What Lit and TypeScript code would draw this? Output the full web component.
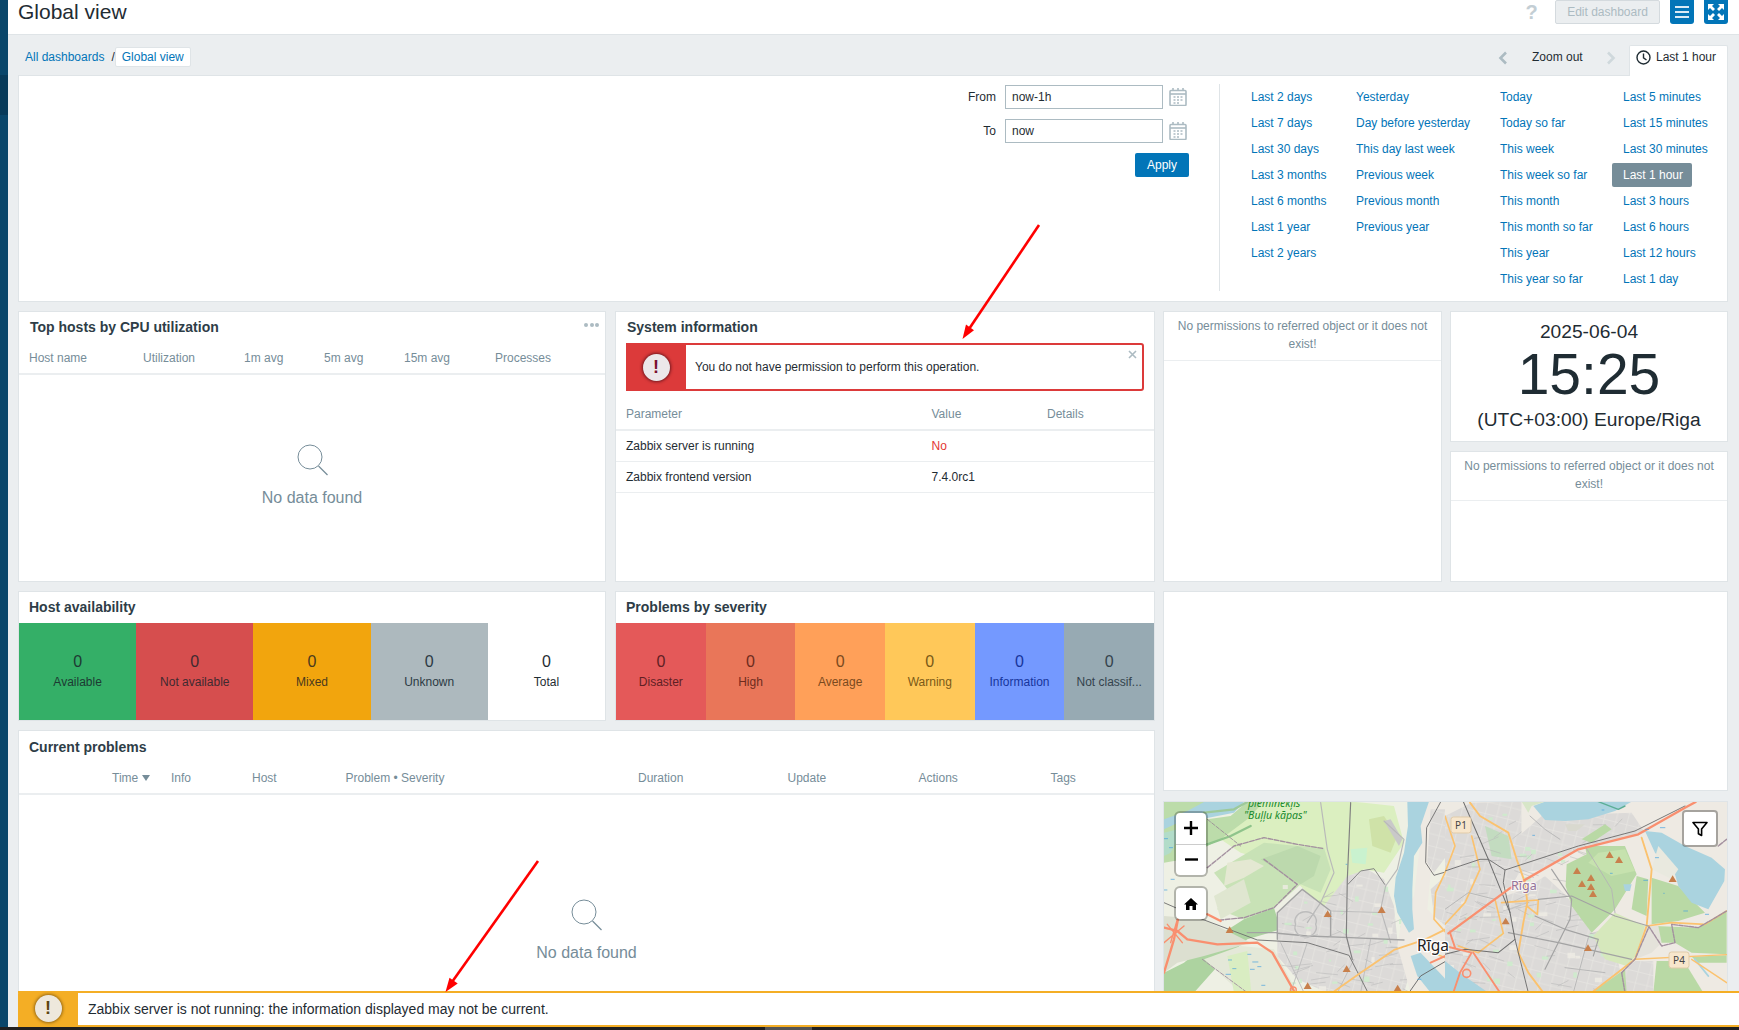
import { LitElement, html, css, svg } from "lit";
import { customElement } from "lit/decorators.js";

const QUICK: string[][] = [
  ["Last 2 days", "Yesterday", "Today", "Last 5 minutes"],
  ["Last 7 days", "Day before yesterday", "Today so far", "Last 15 minutes"],
  ["Last 30 days", "This day last week", "This week", "Last 30 minutes"],
  ["Last 3 months", "Previous week", "This week so far", "Last 1 hour"],
  ["Last 6 months", "Previous month", "This month", "Last 3 hours"],
  ["Last 1 year", "Previous year", "This month so far", "Last 6 hours"],
  ["Last 2 years", "", "This year", "Last 12 hours"],
  ["", "", "This year so far", "Last 1 day"],
];

const HOST = [
  ["Available", "av"], ["Not available", "na"], ["Mixed", "mx"], ["Unknown", "un"], ["Total", "tt"],
];
const SEV = [
  ["Disaster", "s1"], ["High", "s2"], ["Average", "s3"], ["Warning", "s4"], ["Information", "s5"], ["Not classif...", "s6"],
];

// Map artwork: each array is written in the pixel space of a 3x crop, scaled by the groups below.
const tri = (x: number, y: number) => svg`<polygon points="${x},${y - 11} ${x + 12},${y + 9} ${x - 12},${y + 9}" fill="#c8804c"/>`;
const dash = (x: number, y: number, w = 12) => svg`<line x1=${x} y1=${y} x2=${x + w} y2=${y} stroke="#3f9fe0" stroke-width="2"/>`;
const p = (d: string, s: string, w: number, extra = "") => svg`<path d=${d} fill="none" stroke=${s} stroke-width=${w * 1.4} stroke-linejoin="round" stroke-linecap="round" stroke-dasharray=${extra || "none"}/>`;
const f = (d: string, c: string) => svg`<path d=${d} fill=${c}/>`;

// Deterministic speckle: small parks and side streets inside the built-up areas.
function speckle(seed: number, n: number, x0: number, x1: number, y0: number, y1: number) {
  let s = seed;
  const r = () => { s = (s * 9301 + 49297) % 233280; return s / 233280; };
  const out = [];
  for (let i = 0; i < n; i++) {
    const x = x0 + r() * (x1 - x0), y = y0 + r() * (y1 - y0), k = r();
    if (k < 0.3) out.push(svg`<rect x=${x} y=${y} width=${6 + r() * 16} height=${5 + r() * 12} fill="#cdeccb" opacity=".85"/>`);
    else if (k < 0.5) out.push(svg`<rect x=${x} y=${y} width=${8 + r() * 20} height=${6 + r() * 14} fill="#efece5" opacity=".8"/>`);
    else out.push(svg`<line x1=${x} y1=${y} x2=${x + 20 + r() * 50} y2=${y + (r() - .5) * 50} stroke="#b7b7b7" stroke-width="1.6"/>`);
  }
  return out;
}

const URBAN = "url(#city)";
const leftMap = svg`
  ${f("M0 0H860V600H0Z", "#eef0e4")}
  ${f("M300 17H560L600 20 690 30 720 140 660 230 600 220 550 260 480 340 400 260 300 190 230 170 170 130 130 90Z", "#dbefc0")}
  ${f("M0 17H120L130 70 200 60 250 17H300L250 70 170 130 130 150 60 190 0 200Z", "#bcdcaa")}
  ${f("M150 230 300 140 400 150 480 155 500 220 470 290 410 265 330 335 240 370 160 340 190 280Z", "#c8e2b6")}
  ${f("M290 190 400 150 470 180 450 240 410 265Z", "#bcd9ad")}
  ${f("M240 370 330 335 350 400 250 430 170 500 90 590H0V530L60 500 130 440Z", "#add3a0")}
  ${f("M120 490 230 450 330 460 400 590H230Z", "#e4e8d8")}
  ${f("M190 480 250 465 262 590H210Z", "#d9edc2")}
  ${f("M340 350 415 280 480 330 550 240 610 220 660 250 690 330 700 430 745 510 720 590H490L400 550 340 480Z", URBAN)}
  ${speckle(11, 70, 350, 720, 260, 580)}
  ${f("M150 300 240 250 260 320 170 370Z", "#dfe6d0")}
  ${f("M190 200 260 190 300 210 240 245 180 270Z", "#e4e8d2")}
  ${f("M0 360 120 370 260 440 120 480 40 500 0 530Z", "#dcdfd0")}
  ${f("M560 160 610 155 605 205 565 200Z", "#c9f2cf")}
  ${f("M615 70 660 60 700 120 680 170 625 150Z", "#cfe2a8")}
  ${f("M770 17H855V170L800 230 790 340 850 400 855 590H740L700 450 715 360 750 300 770 130Z", "#eeeae3")}
  ${f("M800 40H855V170L810 230 790 200Z", URBAN)}
  ${f("M800 280 855 230V400L810 360Z", URBAN)}
  ${f("M730 17H795L770 90 775 140 750 180 745 280 745 340 750 400 735 410 700 350 690 300 695 245 720 170 732 90Z", "#aad3df")}
  ${f("M740 480 770 470 855 560V590H800L760 540Z", "#aad3df")}
  ${f("M120 18H240L210 50 130 66 60 72 0 100V70L70 45Z", "#aad3df")}
  ${f("M660 75 680 70 715 130 705 150Z", "#c9c9c9")}
  ${f("M0 110 60 95 20 170 0 180Z", "#b2dcc9")}
  ${p("M120 50 210 40 250 18", "#9dc99a", 5)}
  ${p("M60 140 130 145 200 120 260 90", "#8fc48b", 5)}
  ${p("M300 190 400 265 330 335 240 365 170 372", "#a3909f", 3, "14 5")}
  ${p("M130 215 210 150 300 125 400 145 480 158", "#a3909f", 3, "14 5")}
  ${p("M115 490 250 590", "#a3909f", 2, "12 5")}
  ${p("M130 70 230 150", "#9c8f98", 2, "12 5")}
  ${p("M470 20 490 160 510 230 470 320 430 380", "#b9b9b9", 2.5)}
  ${p("M660 75 720 130 700 220 665 270 650 340 680 440", "#b9b9b9", 2.5)}
  ${p("M340 430V350L415 280 500 345V420", "#a3a3a3", 3)}
  ${p("M340 412 430 420 560 425 720 432", "#a3a3a3", 3)}
  ${p("M250 410H340", "#a3a3a3", 3)}
  ${p("M500 345 660 350", "#bcbcbc", 2)}
  ${p("M395 385a32 28 0 1 1 60 0 32 28 0 1 1 -60 0", "#bcbcbc", 3)}
  ${p("M350 440 420 590", "#bcbcbc", 2)}
  ${p("M430 440 380 590", "#bcbcbc", 2)}
  ${p("M620 430 590 590", "#bcbcbc", 2)}
  ${p("M570 490 520 590", "#bcbcbc", 2)}
  ${p("M560 20 550 250 547 420 565 490", "#808080", 2.5)}
  ${p("M0 320 110 368 280 432 430 440 555 478 612 590", "#707070", 2)}
  ${p("M552 265 590 225 630 218 662 265", "#808080", 2)}
  ${p("M855 225 810 238 785 200 788 95 830 18", "#707070", 2)}
  ${p("M735 590 770 540 855 490", "#666", 2)}
  ${p("M505 590 590 530 690 462 780 432 855 395", "#fbc26e", 4)}
  ${p("M855 205 815 290 810 370 855 420", "#fbc26e", 3.5)}
  ${p("M770 455 855 490", "#fbc26e", 3.5)}
  ${p("M130 355 170 375", "#f98f6f", 5)}
  ${p("M0 395 40 405 70 430 160 445 280 440 325 470 390 585", "#f98f6f", 5)}
  ${p("M42 370 30 430 0 530", "#f98f6f", 5)}
  ${p("M0 440 60 390 M10 385 55 440 M20 440 40 370", "#f98f6f", 3)}
  <circle cx="388" cy="582" r="9" fill="none" stroke="#f98f6f" stroke-width="4"/>
  ${p("M855 475 800 500", "#f98f6f", 4)}
  ${dash(192, 492)}${dash(205, 518)}${dash(250, 475)}${dash(265, 498, 18)}${dash(185, 535, 16)}${dash(258, 520, 14)}${dash(280, 512)}${dash(292, 568)}
  ${dash(0, 128)}${dash(15, 155)}${dash(20, 250)}${dash(0, 282, 10)}${dash(545, 205, 5)}${dash(760, 550, 12)}
  ${tri(197, 402)}${tri(491, 354)}${tri(653, 342)}${tri(548, 519)}${tri(431, 570)}${tri(701, 577)}
`;

const rightMap = svg`
  ${f("M0 0H880V600H0Z", "#eeeae3")}
  ${f("M0 60 80 20 230 17V220L180 300 0 400Z", URBAN)}
  ${f("M230 17H280L270 100 360 150 300 240 230 240Z", "#eeeae3")}
  ${f("M120 90 190 120 200 190 140 180Z", "#c3dcc0")}
  ${f("M290 60 560 50 600 110 420 150 300 220 220 230 210 130Z", URBAN)}
  ${f("M0 400 180 300 240 280 300 240 365 300 440 410 480 440 520 500 540 590H0Z", URBAN)}
  ${speckle(23, 90, 0, 520, 240, 580)}
  ${speckle(37, 35, 0, 560, 40, 230)}
  ${f("M365 205 425 175 420 150 540 150 575 235 510 340 500 350 440 410 380 330 362 270Z", "#b9d9a5")}
  ${f("M460 170 540 160 570 225 500 240 430 200Z", "#c6e2ae")}
  ${f("M575 240 610 250 605 360 560 340Z", "#b9d9a5")}
  ${f("M620 245 700 270 780 350 700 375 620 385Z", "#b9d9a5")}
  ${f("M445 420 510 350 600 390 590 460 545 510 480 490Z", "#d6e8bc")}
  ${f("M630 390 760 395 845 345V475L740 470 690 440 640 440Z", "#b9d9a5")}
  ${f("M635 495H720L780 590H625Z", "#b9d9a5")}
  ${f("M740 482 845 478V565L780 520Z", "#b9d9a5")}
  ${f("M530 530 570 495 625 495 625 590H540Z", URBAN)}
  ${f("M440 590 540 520 545 590Z", "#b9d9a5")}
  ${f("M720 500 775 590H850V500Z", "#eeeae3")}
  ${f("M600 390 640 390 650 440 620 470 570 490Z", "#e4e2da")}
  ${f("M265 30 300 17H560L510 45 430 70 360 75 300 72Z", "#aad3df")}
  ${f("M600 105 650 110 720 150 800 185 840 220 838 255 790 340 740 320 700 270 690 235 630 170Z", "#aad3df")}
  ${f("M0 495 50 535 130 590H0Z", "#aad3df")}
  ${f("M230 17H300L260 30 250 50Z", "#d7e6c8")}
  ${f("M360 85H420L395 105 370 105Z", "#d9d9cf")}
  ${f("M410 130 480 85 500 100 440 140Z", "#b9d9a5")}
  ${f("M535 265 560 265 555 285 540 285Z", "#aad3df")}
  ${f("M640 150 700 220 680 250 620 220Z", "#e9e9df")}
  ${p("M460 17 520 40 540 30", "#5cae96", 3)}
  ${p("M750 490 790 540", "#aad3df", 4)}
  ${p("M0 60 30 150 0 230", "#fbc26e", 3.5)}
  ${p("M75 20 105 60 190 110 215 190 240 260 247 320 235 380 220 470 250 530 295 590", "#fbc26e", 4)}
  ${p("M80 120 105 220 60 320 0 385", "#fbc26e", 3.5)}
  ${p("M150 310 175 412 100 470 40 450", "#fbc26e", 3.5)}
  ${p("M170 320 280 312 277 355 245 330", "#fbc26e", 3.5)}
  ${p("M590 125 620 220 605 390 570 490 440 590", "#fbc26e", 4)}
  ${p("M605 390 680 380 780 385 845 345", "#fbc26e", 3.5)}
  ${p("M570 490 845 476", "#fbc26e", 3)}
  ${p("M740 490 845 560", "#fbc26e", 3)}
  ${p("M290 590 440 590", "#fbc26e", 3)}
  ${p("M270 360 360 400 460 430 445 480", "#a3a3a3", 2.5)}
  ${p("M190 410 340 440 560 490", "#a3a3a3", 2.5)}
  ${p("M280 310 380 300 510 360 610 390", "#a3a3a3", 2.5)}
  ${p("M320 220 380 310 375 370 300 520", "#a3a3a3", 2.5)}
  ${p("M430 425 385 590", "#b5b5b5", 2)}
  ${p("M360 515 480 530", "#b5b5b5", 2)}
  ${p("M255 60 300 100 345 130", "#b5b5b5", 2)}
  ${p("M420 150 500 280 510 350", "#b5b5b5", 2)}
  ${p("M0 340 70 290 150 310", "#b5b5b5", 2)}
  ${p("M530 530 570 490 612 392 650 450 690 440 680 385 760 395 845 345", "#a3909f", 3, "12 4")}
  ${p("M530 530 540 590", "#a3909f", 3, "12 4")}
  ${p("M845 130 820 150", "#a3909f", 3, "12 4")}
  ${p("M55 17 130 190 195 350 210 430 160 470 60 460 0 475", "#6e6e6e", 2.2)}
  ${p("M0 225 105 190 130 190 180 222 400 150 570 105 720 30", "#6e6e6e", 2)}
  ${p("M180 222 175 260 195 350", "#6e6e6e", 2)}
  ${p("M210 430 250 590", "#6e6e6e", 2)}
  ${p("M10 412 190 280 400 160 580 115 720 35 752 18", "#f98f6f", 5)}
  ${p("M0 450 80 470 45 530 25 590", "#f98f6f", 4)}
  ${p("M15 410 30 455", "#f98f6f", 4)}
  ${p("M85 470 165 590", "#f98f6f", 4)}
  <circle cx="65" cy="532" r="12" fill="none" stroke="#f98f6f" stroke-width="5"/>
  ${dash(470, 42, 8)}${dash(600, 100)}${dash(645, 95, 16)}${dash(595, 253, 14)}${dash(630, 185)}${dash(715, 345, 14)}${dash(780, 355)}${dash(495, 232, 8)}${dash(262, 118, 8)}${dash(655, 292, 4)}
  ${tri(494, 177)}${tri(522, 192)}${tri(396, 225)}${tri(438, 246)}${tri(411, 264)}${tri(438, 273)}${tri(444, 294)}${tri(683, 249)}${tri(182, 376)}${tri(429, 456)}
`;

@customElement("app-root")
export class AppRoot extends LitElement {
  static styles = css`
    :host { display: block; width: 1739px; height: 1030px; position: relative; overflow: hidden;
      font-family: "Liberation Sans", Arial, sans-serif; font-size: 12px; color: #1f2c33; background: #ebeef0; }
    * { box-sizing: border-box; }
    a { color: #0275b8; text-decoration: none; white-space: nowrap; }
    .shell { display: flex; height: 1027px; }
    .taskbar { height: 3px; background: #202020; display: flex; padding-left: 765px; }
    .taskbar i { display: block; width: 47px; background: #555; }
    .side { width: 8px; flex: none; background: #0a466a; padding-top: 75px; }
    .side i { display: block; height: 40px; background: #083a59; }
    .main { flex: 1; min-width: 0; position: relative; overflow: hidden; }

    .top { height: 35px; background: #fff; border-bottom: 1px solid #dfe4e7; display: flex; padding-left: 10px; padding-right: 11px; }
    .top h1 { margin: 0; font-size: 21px; font-weight: 400; line-height: 24px; flex: 1; }
    .help { width: 47px; text-align: center; font-size: 20px; font-weight: 700; color: #c3ced4; line-height: 24px; }
    .edit { width: 105px; height: 24px; background: #ebeef0; border: 1px solid #d4dade; border-radius: 2px; color: #acbbc2; font-size: 12px; line-height: 22px; text-align: center; }
    .ib { width: 24px; height: 24px; background: #0275b8; border-radius: 0 0 3px 3px; margin-left: 10px; display: flex; align-items: center; justify-content: center; }

    .sub { height: 40px; display: flex; padding-left: 10px; padding-right: 11px; }
    .crumbs { flex: 1; display: flex; align-items: flex-start; padding-top: 12px; }
    .crumbs a.plain { padding: 0 7px 0 7px; line-height: 20px; }
    .crumbs span { line-height: 20px; color: #1f2c33; }
    .crumbs a.cur { background: #fff; border: 1px solid #dfe4e7; line-height: 18px; height: 20px; padding: 0 6px; margin-left: 0; border-radius: 2px; }
    .zoom { display: flex; align-items: flex-start; padding-top: 15px; }
    .zoom .lbl { line-height: 14px; width: 74px; }
    .chev { margin-top: 1px; display: block; }
    .chev.l { margin-right: 24px; }
    .chev.r { margin-right: 13px; }
    .tab { width: 99px; margin-top: 10px; height: 31px; background: #fff; border: 1px solid #dfe4e7; border-bottom: 0; display: flex; align-items: center; gap: 5px; padding: 0 0 8px 6px; position: relative; z-index: 1; border-radius: 2px 2px 0 0; white-space: nowrap; }

    .filter { width: 1710px; margin-left: 10px; height: 227px; background: #fff; border: 1px solid #dfe4e7; display: flex; justify-content: flex-end; padding-top: 9px; }
    .form { width: 232px; margin-right: 29px; display: flex; flex-direction: column; gap: 10px; }
    .frow { display: flex; align-items: center; height: 24px; }
    .frow label { flex: 1; text-align: right; padding-right: 9px; }
    .frow .inp { width: 158px; height: 24px; border: 1px solid #acbbc2; padding: 0 6px; line-height: 22px; background: #fff; flex: none; }
    .frow svg { margin-left: 6px; margin-right: 3px; flex: none; }
    .apply { align-self: flex-end; width: 54px; margin-right: 1px; height: 24px; background: #0275b8; color: #fff; border-radius: 2px; line-height: 24px; text-align: center; }
    .quick { width: 508px; border-left: 1px solid #dfe4e7; height: 207px; padding-left: 31px; display: grid; grid-template-columns: 105px 144px 123px 1fr; grid-auto-rows: 26px; align-items: center; margin-top: -1px; }
    .quick a.on { background: #768d99; color: #fff; margin-left: -11px; padding: 0 8px 0 11px; width: 80px; height: 24px; line-height: 24px; border-radius: 2px; }

    .grid { margin: 9px 0 0 10px; width: 1711px; display: grid; grid-template-columns: 589px 540px 279px 278px; column-gap: 8px; row-gap: 9px; grid-template-rows: 131px 130.5px 130.5px 61px 272px; }
    .w { background: #fff; border: 1px solid #dfe4e7; display: flex; flex-direction: column; min-width: 0; overflow: hidden; position: relative; }
    .a-top { grid-column: 1; grid-row: 1 / 3; margin-right: 1px; }
    .a-sys { grid-column: 2; grid-row: 1 / 3; }
    .a-per { grid-column: 3; grid-row: 1 / 3; }
    .a-clk { grid-column: 4; grid-row: 1; }
    .a-pe2 { grid-column: 4; grid-row: 2; }
    .a-hst { grid-column: 1; grid-row: 3; margin-right: 1px; }
    .a-sev { grid-column: 2; grid-row: 3; }
    .a-bla { grid-column: 3 / 5; grid-row: 3 / 5; }
    .a-cur { grid-column: 1 / 3; grid-row: 4 / 6; }
    .a-map { grid-column: 3 / 5; grid-row: 5; margin-top: 1px; }

    .ttl { height: 30px; padding-left: 10px; font-size: 14px; font-weight: 700; line-height: 30px; color: #2e3d47; flex: none; display: flex; justify-content: space-between; }
    .ttl.ind { padding-left: 11px; }
    .ttl.tall { height: 31.5px; line-height: 30px; }
    .ttl.cur { height: 31px; line-height: 32px; }
    .dots { width: 15px; height: 4px; margin: 11px 6px 0 0; display: flex; justify-content: space-between; }
    .dots i { width: 4px; height: 4px; border-radius: 50%; background: #acbbc2; }
    .thead { display: grid; height: 33px; align-items: center; border-bottom: 2px solid #ebeef0; color: #768d99; flex: none; }
    .cpu { grid-template-columns: 114px 101px 80px 80px 91px 1fr; padding-left: 10px; }
    .prob { grid-template-columns: 93px 59px 81px 93.5px 292.5px 149.5px 131px 132px 1fr; }
    .prob .time { display: flex; align-items: center; gap: 4px; }
    .thead.sysh { height: 40px; padding: 0 0 8px 10px; align-items: end; grid-template-columns: 305.5px 115.5px 1fr; }
    .sysr { display: grid; grid-template-columns: 305.5px 1fr; height: 31px; align-items: center; padding: 0 0 1px 10px; border-bottom: 1px solid #ebeef0; }
    .no { color: #e33734; }
    .msg { margin: 1px 10px 0; height: 48px; border: 2px solid #dc3a3a; border-radius: 3px; display: flex; position: relative; flex: none; }
    .msg .ico { width: 60px; margin: -2px 0 -2px -2px; background: #dc3a3a; display: flex; align-items: center; justify-content: center; flex: none; }
    .circ { width: 27px; height: 27px; border-radius: 50%; background: #ece8ea; box-shadow: 0 0 3px 1px rgba(70,10,20,.7); display: flex; align-items: center; justify-content: center; font-weight: 700; font-size: 18px; color: #7a1030; }
    .msg .tx { padding-left: 9px; line-height: 44px; flex: 1; }
    .msg .x { position: absolute; right: 5px; top: 5px; display: block; }
    .nodata { flex: 1; display: flex; flex-direction: column; align-items: center; justify-content: center; gap: 11px; color: #768d99; font-size: 16px; line-height: 22px; padding-bottom: 3px; }
    .perm { height: 49px; border-bottom: 1px solid #ebeef0; text-align: center; color: #768d99; line-height: 18px; padding: 5px 8px 0; flex: none; }
    .clock { align-items: center; justify-content: flex-start; text-align: center; }
    .clock .d { font-size: 19.2px; line-height: 22px; margin-top: 9px; }
    .clock .t { font-size: 57px; line-height: 56px; margin-top: 3px; }
    .clock .z { font-size: 19.2px; line-height: 22px; margin-top: 7px; white-space: nowrap; }
    .bars { flex: 1; display: grid; }
    .bars.h { grid-template-columns: repeat(5, 1fr); }
    .bars.s { grid-template-columns: repeat(6, 1fr); }
    .bar { display: flex; flex-direction: column; align-items: center; padding-top: 29px; min-width: 0; }
    .bar b { font-weight: 400; font-size: 16px; line-height: 20px; }
    .bar span { line-height: 14px; margin-top: 3px; white-space: nowrap; }
    .av { background: #34af67; color: #1d3a33; }
    .na { background: #d64e4e; color: #3f2a30; }
    .mx { background: #f2a50d; color: #4a3a1e; }
    .un { background: #adb9be; color: #2c3a44; }
    .tt { background: #fff; color: #1f2c33; }
    .s1 { background: #e45959; color: #5f1f24; }
    .s2 { background: #e97659; color: #6d2c1e; }
    .s3 { background: #ffa059; color: #7a4a1e; }
    .s4 { background: #ffc859; color: #7a5a18; }
    .s5 { background: #7499ff; color: #17359c; }
    .s6 { background: #97aab3; color: #34434d; }
    .a-map svg.mapart { display: block; width: 563px; height: 190px; position: relative; }
    .a-map .mapbg { position: absolute; inset: 0; background: #eeeae3; }
    .ctl { position: absolute; background: #fff; border-radius: 4px; box-shadow: 0 0 0 2px rgba(0,0,0,.25); display: flex; flex-direction: column; align-items: center; justify-content: center; color: #000; }
    .zoomc { left: 12px; top: 11px; width: 30px; height: 62px; }
    .zoomc div { width: 100%; flex: 1; display: flex; align-items: center; justify-content: center; }
    .zoomc div + div { border-top: 1px solid #ccc; }
    .homec { left: 12px; top: 86px; width: 30px; height: 31px; }
    .filc { right: 11px; top: 10px; width: 32px; height: 33px; box-shadow: 0 0 0 2px rgba(0,0,0,.3); border-radius: 2px; }

    .warn { position: absolute; left: 10px; right: 0; bottom: 0; height: 36.5px; background: #fff; border-top: 2px solid #f4ae25; border-bottom: 2px solid #f4ae25; display: flex; align-items: center; z-index: 5; }
    .warn .ico { width: 60px; height: calc(100% + 4px); background: #f4ae25; border-radius: 3px 0 0 3px; display: flex; align-items: center; justify-content: center; flex: none; }
    .warn .circ { color: #5c4410; background: #eee8dc; box-shadow: 0 0 3px 1px rgba(90,60,10,.6); }
    .warn .tx { font-size: 14px; padding-left: 10px; }
    .arrows { position: absolute; left: 0; top: 0; z-index: 9; pointer-events: none; }
  `;

  private mag() {
    return html`<svg width="31" height="32" viewBox="0 0 31 32"><circle cx="13" cy="13" r="12" fill="none" stroke="#768d99" stroke-width="1"/><path d="M21.5 22 30.5 31" stroke="#768d99" stroke-width="1.2"/></svg>`;
  }
  private cal() {
    return html`<svg width="18" height="18" viewBox="0 0 18 18"><rect x="1" y="2.5" width="16" height="15" rx="1" fill="#fff" stroke="#acbbc2" stroke-width="1.6"/><path d="M1 6h16" stroke="#acbbc2" stroke-width="1.6"/><path d="M4 0v3M9 0v3M14 0v3" stroke="#acbbc2" stroke-width="1.6"/><path d="M4.5 9h2M8 9h2M11.5 9h2M4.5 12h2M8 12h2M11.5 12h2M4.5 15h2M8 15h2" stroke="#acbbc2" stroke-width="1.4"/></svg>`;
  }

  render() {
    return html`
      <div class="shell">
        <div class="side"><i></i></div>
        <div class="main">
          <div class="top">
            <h1>Global view</h1>
            <div class="help">?</div>
            <div class="edit">Edit dashboard</div>
            <div class="ib"><svg width="16" height="14" viewBox="0 0 16 14"><path d="M1 2h14M1 7h14M1 12h14" stroke="#fff" stroke-opacity=".85" stroke-width="2"/></svg></div>
            <div class="ib"><svg width="18" height="18" viewBox="0 0 18 18" fill="#fff"><path d="M1 1h6L5 3l3 3-2 2-3-3-2 2zM17 1v6l-2-2-3 3-2-2 3-3-2-2zM1 17v-6l2 2 3-3 2 2-3 3 2 2zM17 17h-6l2-2-3-3 2-2 3 3 2-2z"/></svg></div>
          </div>
          <div class="sub">
            <div class="crumbs"><a class="plain" href="#">All dashboards</a><span>/</span><a class="cur" href="#">Global view</a></div>
            <div class="zoom">
              <svg class="chev l" width="10" height="14" viewBox="0 0 10 14"><path d="M8 1.5 2.5 7 8 12.5" fill="none" stroke="#acbbc2" stroke-width="2.6"/></svg>
              <div class="lbl">Zoom out</div>
              <svg class="chev r" width="10" height="14" viewBox="0 0 10 14"><path d="M2 1.5 7.5 7 2 12.5" fill="none" stroke="#cfd8dc" stroke-width="2.6"/></svg>
            </div>
            <div class="tab"><svg width="15" height="15" viewBox="0 0 15 15"><circle cx="7.5" cy="7.5" r="6.5" fill="none" stroke="#1f2c33" stroke-width="1.4"/><path d="M7.5 3.5v4.3l3 2.2" fill="none" stroke="#1f2c33" stroke-width="1.4"/></svg><span>Last 1 hour</span></div>
          </div>
          <div class="filter">
            <div class="form">
              <div class="frow"><label>From</label><div class="inp">now-1h</div>${this.cal()}</div>
              <div class="frow"><label>To</label><div class="inp">now</div>${this.cal()}</div>
              <div class="apply">Apply</div>
            </div>
            <div class="quick">
              ${QUICK.flat().map((t) => t === "" ? html`<span></span>` : html`<a href="#" class=${t === "Last 1 hour" ? "on" : ""}>${t}</a>`)}
            </div>
          </div>
          <div class="grid">
            <section class="w a-top">
              <div class="ttl ind"><span>Top hosts by CPU utilization</span><div class="dots"><i></i><i></i><i></i></div></div>
              <div class="thead cpu"><span>Host name</span><span>Utilization</span><span>1m avg</span><span>5m avg</span><span>15m avg</span><span>Processes</span></div>
              <div class="nodata">${this.mag()}<span>No data found</span></div>
            </section>
            <section class="w a-sys">
              <div class="ttl ind"><span>System information</span></div>
              <div class="msg">
                <div class="ico"><div class="circ">!</div></div>
                <div class="tx">You do not have permission to perform this operation.</div>
                <svg class="x" width="9" height="9" viewBox="0 0 9 9"><path d="M1 1l7 7M8 1 1 8" stroke="#acbbc2" stroke-width="1.6"/></svg>
              </div>
              <div class="thead sysh"><span>Parameter</span><span>Value</span><span>Details</span></div>
              <div class="sysr"><span>Zabbix server is running</span><span class="no">No</span></div>
              <div class="sysr"><span>Zabbix frontend version</span><span>7.4.0rc1</span></div>
            </section>
            <section class="w a-per"><div class="perm">No permissions to referred object or it does not exist!</div></section>
            <section class="w a-clk clock">
              <div class="d">2025-06-04</div>
              <div class="t">15:25</div>
              <div class="z">(UTC+03:00) Europe/Riga</div>
            </section>
            <section class="w a-pe2"><div class="perm">No permissions to referred object or it does not exist!</div></section>
            <section class="w a-hst">
              <div class="ttl tall"><span>Host availability</span></div>
              <div class="bars h">${HOST.map(([l, c]) => html`<div class="bar ${c}"><b>0</b><span>${l}</span></div>`)}</div>
            </section>
            <section class="w a-sev">
              <div class="ttl tall"><span>Problems by severity</span></div>
              <div class="bars s">${SEV.map(([l, c]) => html`<div class="bar ${c}"><b>0</b><span>${l}</span></div>`)}</div>
            </section>
            <section class="w a-bla"></section>
            <section class="w a-cur">
              <div class="ttl cur"><span>Current problems</span></div>
              <div class="thead prob"><span></span><span class="time">Time <svg width="8" height="6" viewBox="0 0 8 6"><path d="M0 0h8L4 6z" fill="#768d99"/></svg></span><span>Info</span><span>Host</span><span>Problem • Severity</span><span>Duration</span><span>Update</span><span>Actions</span><span>Tags</span></div>
              <div class="nodata">${this.mag()}<span>No data found</span></div>
            </section>
            <section class="w a-map">
              <div class="mapbg"></div>
              <svg class="mapart" viewBox="0 0 563 190">
                <defs>
                  <pattern id="city" width="70" height="70" patternUnits="userSpaceOnUse" patternTransform="rotate(14)">
                    <rect width="70" height="70" fill="#dcdad8"/>
                    <path d="M0 22H70M0 56H70M26 0V70M60 0V70" stroke="#e8e6e2" stroke-width="2"/>
                  </pattern>
                  <clipPath id="mapclip-l"><rect x="0" y="0" width="281" height="190"/></clipPath>
                </defs>
                <g transform="translate(281,-6) scale(.3333)">${rightMap}</g>
                <g clip-path="url(#mapclip-l)"><g transform="translate(0,-6) scale(.3333)">${leftMap}</g></g>
                <text x="84" y="5" font-family="Noto Sans" font-size="10.5" font-style="italic" fill="#178a2c">pieminekļis</text>
                <text x="80" y="17" font-family="Noto Sans" font-size="10.5" font-style="italic" fill="#178a2c">"Buļļu kāpas"</text>
                <text x="253" y="149" font-family="Noto Sans" font-size="15.5" fill="#222" stroke="#fff" stroke-width="2.5" paint-order="stroke">Rīga</text>
                <text x="347" y="88" font-family="Noto Sans" font-size="12.5" fill="#94739a" stroke="#fff" stroke-opacity=".7" stroke-width="2" paint-order="stroke">Rīga</text>
                <rect x="287" y="15" width="20" height="16" rx="2.5" fill="#f7e6cc" stroke="#e0cba9"/>
                <text x="297" y="27" text-anchor="middle" font-family="Noto Sans" font-size="10" fill="#444">P1</text>
                <rect x="505" y="150" width="20" height="16" rx="2.5" fill="#f7e6cc" stroke="#e0cba9"/>
                <text x="515" y="162" text-anchor="middle" font-family="Noto Sans" font-size="10" fill="#444">P4</text>
              </svg>
              <div class="ctl zoomc">
                <div><svg width="14" height="14" viewBox="0 0 14 14"><path d="M0 7h14M7 0v14" stroke="#000" stroke-width="2.4"/></svg></div>
                <div><svg width="13" height="3" viewBox="0 0 13 3"><path d="M0 1.5h13" stroke="#000" stroke-width="2.4"/></svg></div>
              </div>
              <div class="ctl homec"><svg width="14" height="12" viewBox="0 0 14 12"><path d="M7 0 14 6.5H12V12H8.5V8h-3v4H2V6.5H0Z" fill="#000"/></svg></div>
              <div class="ctl filc"><svg width="16" height="16" viewBox="0 0 16 16"><path d="M1 1.5h14L9.6 8v6.5L6.4 12.8V8Z" fill="#fff" stroke="#000" stroke-width="1.6" stroke-linejoin="round"/></svg></div>
            </section>
          </div>
          <div class="warn">
            <div class="ico"><div class="circ">!</div></div>
            <div class="tx">Zabbix server is not running: the information displayed may not be current.</div>
          </div>
        </div>
      </div>
      <div class="taskbar"><i></i></div>
      <svg class="arrows" width="1739" height="1030" viewBox="0 0 1739 1030">
        <path d="M1039 225 969 329" stroke="#f00" stroke-width="2.6" fill="none"/>
        <polygon points="962.5,339 966,324.6 974,330.2" fill="#f00"/>
        <path d="M538 861 452 982" stroke="#f00" stroke-width="2.6" fill="none"/>
        <polygon points="445.5,992 449.5,977.7 457.7,983.5" fill="#f00"/>
      </svg>
    `;
  }
}
